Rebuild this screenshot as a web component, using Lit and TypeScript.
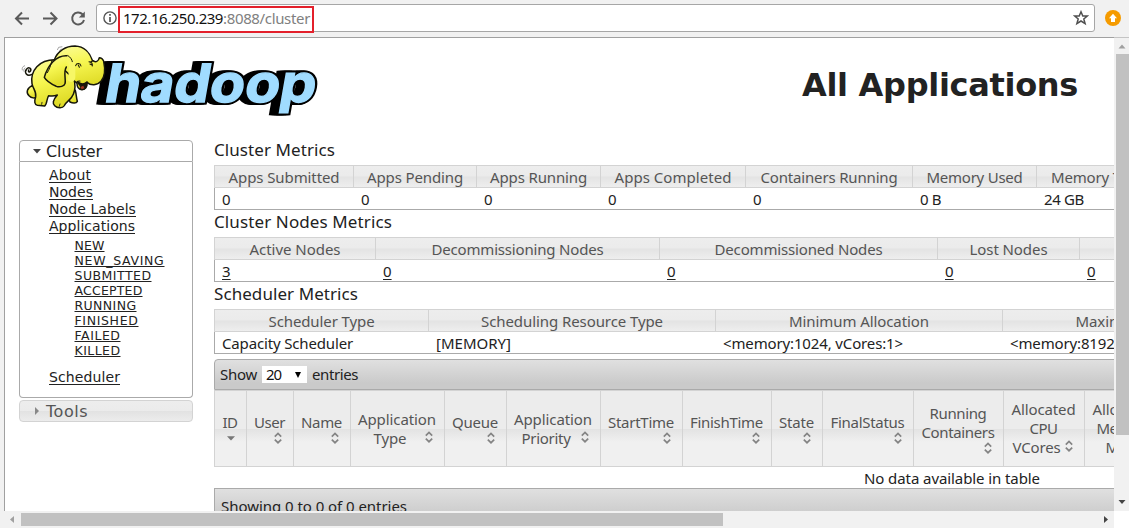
import { LitElement, html, css, svg, nothing } from "lit";
import { customElement } from "lit/decorators.js";

type Col = { w: number; head: string; hw: number; val: string; vw?: number; link?: boolean };
type AppCol = { w: number; lines: [string, number][]; inline?: boolean; sorted?: boolean };

const METRICS: { title: string; tw: number; cols: Col[] }[] = [
  {
    title: "Cluster Metrics", tw: 121,
    cols: [
      { w: 139, head: "Apps Submitted", hw: 111, val: "0" },
      { w: 123, head: "Apps Pending", hw: 96, val: "0" },
      { w: 124, head: "Apps Running", hw: 97, val: "0" },
      { w: 145, head: "Apps Completed", hw: 117, val: "0" },
      { w: 167, head: "Containers Running", hw: 137, val: "0" },
      { w: 124, head: "Memory Used", hw: 96, val: "0 B", vw: 21 },
      { w: 124, head: "Memory Total", hw: 95, val: "24 GB", vw: 40 },
    ],
  },
  {
    title: "Cluster Nodes Metrics", tw: 178,
    cols: [
      { w: 161, head: "Active Nodes", hw: 91, val: "3", link: true },
      { w: 284, head: "Decommissioning Nodes", hw: 172, val: "0", link: true },
      { w: 278, head: "Decommissioned Nodes", hw: 168, val: "0", link: true },
      { w: 142, head: "Lost Nodes", hw: 78, val: "0", link: true },
      { w: 222, head: "", hw: 0, val: "0", link: true },
    ],
  },
  {
    title: "Scheduler Metrics", tw: 144,
    cols: [
      { w: 214, head: "Scheduler Type", hw: 106, val: "Capacity Scheduler", vw: 131 },
      { w: 287, head: "Scheduling Resource Type", hw: 182, val: "[MEMORY]", vw: 75 },
      { w: 287, head: "Minimum Allocation", hw: 140, val: "<memory:1024, vCores:1>", vw: 180 },
      { w: 289, head: "Maximum Allocation", hw: 143, val: "<memory:8192, vCores:8>", vw: 180 },
    ],
  },
];

const APP_COLS: AppCol[] = [
  { w: 32, lines: [["ID", 15]], sorted: true },
  { w: 47, lines: [["User", 31]] },
  { w: 57, lines: [["Name", 41]] },
  { w: 94, lines: [["Application", 78], ["Type", 33]], inline: true },
  { w: 62, lines: [["Queue", 46]] },
  { w: 94, lines: [["Application", 78], ["Priority", 49]], inline: true },
  { w: 82, lines: [["StartTime", 66]] },
  { w: 89, lines: [["FinishTime", 73]] },
  { w: 51, lines: [["State", 35]] },
  { w: 91, lines: [["FinalStatus", 74]] },
  { w: 90, lines: [["Running", 57], ["Containers", 73]] },
  { w: 81, lines: [["Allocated", 64], ["CPU", 28], ["VCores", 48]], inline: true },
  { w: 81, lines: [["Allocated", 64], ["Memory", 56], ["MB", 24]], inline: true },
];

const STATES: [string, number][] = [
  ["NEW", 30], ["NEW_SAVING", 90], ["SUBMITTED", 77], ["ACCEPTED", 68],
  ["RUNNING", 62], ["FINISHED", 64], ["FAILED", 46], ["KILLED", 46],
];

const fit = (text: string, w?: number) => html`<span class="fit" data-w=${w ?? nothing}>${text}</span>`;

@customElement("app-root")
export class AppRoot extends LitElement {
  static styles = css`
    :host { display: flex; flex-direction: column; width: 1129px; height: 528px; overflow: hidden; background: #f1f1f1; color: #222;
      font: 15px/19px "Noto Sans", sans-serif; }
    * { box-sizing: border-box; }
    .fit { display: inline-block; white-space: nowrap; }
    .toolbar { flex: none; height: 37px; display: flex; align-items: center; padding: 0 8px 2px 14px; }
    .toolbar svg { flex: none; display: block; }
    .nav { width: 82px; height: 36px; }
    .omni { width: 999px; height: 28px; border: 1px solid #a6a6a6; border-radius: 3px; background: #fff; display: flex; align-items: center; padding: 0 5px 0 6px; margin-top: 1px; }
    .url { width: 196px; height: 27px; margin: 2px 0 0 1px; border: 2px solid #e3202b; padding-left: 3px; line-height: 20px; font-size: 15px; color: #111; }
    .url .path { color: #808080; }
    .star { margin-left: auto; }
    .ext { margin-left: 10px; }
    .view { flex: none; height: 474px; display: flex; }
    .page { width: 1110px; margin-left: 4px; border-left: 1px solid #a0a0a0; border-top: 1px solid #a0a0a0; background: #fff; overflow: hidden; }
    .head { display: flex; height: 102px; }
    .logo { flex: none; margin: 3px 0 0 5px; width: 320px; height: 80px; }
    .title { margin: 27px 0 0 472px; font: bold 32px/40px "DejaVu Sans", sans-serif; color: #222; }
    .cols { display: flex; }
    .side { flex: none; width: 174px; margin: 0 21px 0 14px; font-family: "DejaVu Sans", sans-serif; }
    .sec { height: 22px; display: flex; align-items: center; padding-left: 13px; font-size: 16px; border: 1px solid #aaa; border-radius: 4px 4px 0 0; }
    .sec svg { margin-right: 5px; }
    .sec.off { margin-top: 2px; border-color: #d3d3d3; border-radius: 4px; color: #555; background: linear-gradient(#ededed, #ebebeb 50%, #e2e2e2 51%, #ececec); }
    .list { height: 236px; border: 1px solid #aaa; border-top: 0; border-radius: 0 0 4px 4px; padding: 5px 0 0 29px; font-size: 14px; line-height: 17px; }
    .lnk { display: block; }
    .lnk .fit, .link { text-decoration: underline 1px; text-underline-offset: 2px; text-decoration-skip-ink: none; }
    .subs { padding: 3px 0 11px 25.5px; font-size: 12.5px; line-height: 15px; }
    .subs .fit { text-underline-offset: 1px; }
    .main { flex: none; width: 900px; overflow: hidden; }
    .blk { height: 72px; }
    .cap { height: 25px; font-size: 17px; line-height: 19px; }
    .tbl { width: 1087px; border-left: 1px solid #aaa; border-bottom: 1px solid #aaa; height: 45px; }
    .row { display: flex; margin-left: -1px; }
    .th { flex: none; height: 23px; border: 1px solid #d3d3d3; border-right: 0; color: #555; text-align: center; line-height: 22px;
      background: linear-gradient(#ededed, #ebebeb 49%, #e3e3e3 51%, #eee); }
    .td { flex: none; height: 21px; padding-left: 8px; line-height: 22px; }
    .bar { width: 1476px; height: 31px; border: 1px solid #aaa; border-radius: 4px 0 0 0; display: flex; align-items: center; padding-left: 5px; background: linear-gradient(#e0e0e0, #cacaca 80%); margin-top: 3px; }
    .pick { width: 45px; height: 17px; margin: 0 5px; background: #fff; display: flex; align-items: center; padding: 0 5px 0 4px; justify-content: space-between; color: #111; }
    .apps { display: flex; height: 77px; border-bottom: 1px solid #d3d3d3; }
    .ah { flex: none; border-left: 1px solid #d3d3d3; border-top: 1px solid #d3d3d3; display: flex; flex-direction: column; justify-content: center; color: #555; padding: 0 8px 0 7px; text-align: center;
      background: linear-gradient(#ececec 50%, #e3e3e3 51%, #f0f0f0 68%); }
    .ln { display: flex; justify-content: center; height: 19px; line-height: 19px; }
    .ln.wi { justify-content: flex-start; }
    .ln.wi .g { flex: 1; display: flex; justify-content: center; }
    .ic { flex: none; width: 14px; height: 12px; display: block; }
    .ic.end { align-self: flex-end; }
    .ic.mid { margin-top: 2px; }
    .none { width: 1476px; height: 21px; text-align: center; line-height: 22px; }
    .foot { height: 36px; border-radius: 0; margin-top: 0; padding-left: 6px; }
    .vs { width: 15px; display: flex; flex-direction: column; background: #f1f1f1; border-top: 1px solid #c4c4c4; padding-left: 2px; }
    .vthumb { width: 13px; height: 381px; background: #c1c1c1; }
    .vs svg, .hs svg { display: block; flex: none; }
    .vsp { flex: 1; }
    .hs { flex: none; height: 17px; display: flex; align-items: center; background: #f1f1f1; }
    .hthumb { width: 702px; height: 13px; background: #c1c1c1; }
    .hsp { flex: 1; }
    .corner { width: 15px; height: 17px; background: #fff; }
    .word { font: 700 158px "Inter", "DejaVu Sans", sans-serif; }
  `;

  // Spreads each measured label over the width given in its data.
  firstUpdated() {
    this.renderRoot.querySelectorAll<HTMLElement>(".fit[data-w]").forEach((el) => {
      const n = (el.textContent ?? "").length;
      if (!n) return;
      const diff = Number(el.dataset.w) - el.getBoundingClientRect().width;
      el.style.letterSpacing = `${diff / n}px`;
    });
  }

  logo() {
    const word = (x: number, color: string, sw: number) => svg`
      <text class="word" x=${x} y="182" transform="translate(33 0) skewX(-10)" textLength="632" lengthAdjust="spacingAndGlyphs"
        fill=${color} stroke=${color} stroke-width=${sw} stroke-linejoin="miter" stroke-miterlimit="3">hadoop</text>`;
    return html`<svg class="logo" viewBox="0 0 960 240">
      <defs><linearGradient id="sk" x1="0" y1="0" x2="0.3" y2="1"><stop offset="0" stop-color="#fbfc9c"/><stop offset=".5" stop-color="#f6f650"/><stop offset="1" stop-color="#e0dc28"/></linearGradient></defs>
      ${[256, 261, 266, 271, 276, 279].map((x) => word(x, "#000", 15))}
      ${word(278, "#a0dcff", 4)}
      <g fill="url(#sk)" stroke="#17170a" stroke-width="4.5" stroke-linejoin="round" stroke-linecap="round">
        <path d="M66 100 C50 108 42 94 50 84 C56 76 66 82 61 91 C57 95 54 91 56 87" fill="none"/>
        <path d="M66 134 C50 142 48 156 57 164 C64 171 76 174 80 166 L84 146 Z"/>
        <path d="M172 160 L180 183 C188 187 199 188 202 181 C199 171 199 160 196 148 Z"/>
        <path d="M134 56 C88 56 60 88 66 128 C68 142 80 151 77 168 C72 181 74 192 82 193 L104 195 C112 190 109 174 116 164 C126 166 132 166 142 162 C128 178 127 188 134 194 C142 202 158 202 162 195 C168 181 184 177 190 160 C198 142 195 124 191 110 L150 60 Z"/>
        <path d="M133 56 C143 30 167 15 195 15 C223 16 240 36 247 58 C257 66 266 61 268 50 C273 50 278 53 281 61 C286 84 284 108 273 121 C262 134 242 134 231 124 C232 138 226 147 215 146 C206 145 201 137 201 127 C192 119 184 112 181 104 Z"/>
        <path d="M174 60 C178 78 178 94 172 116 C184 128 196 122 196 108 L196 60 Z" fill="#f7f766" stroke="none"/>
        <path d="M202 122 C211 130 223 130 231 123 C230 139 224 146 215 145 C209 143 215 136 209 132 Z" fill="#1c160c"/>
        <path d="M211 138 L220 134 L223 142 L215 145 Z" fill="#a43822" stroke="none"/>
        <path d="M171 44 C139 42 113 73 103 109 C111 123 124 129 139 136 C150 140 163 135 165 128 C169 117 159 94 169 78"/>
        <path d="M174 44 C181 48 186 56 187 62 M126 58 C122 74 118 86 112 95" fill="none" stroke-width="3"/>
        <path d="M197 74 C200 65 211 66 213 75 M205 72 L208 79 M237 62 C244 62 248 67 247 75 M240 64 L249 59 M240 69 L246 72 M203 121 L210 120" fill="none" stroke-width="3.2"/>
        <path d="M95 190 L96 184 M148 196 L150 189" fill="none" stroke-width="2.5"/>
      </g>
      <path d="M37 88 C35 81 39 75 45 74 M42 92 C40 86 43 82 46 80 M142 27 L146 19 L157 17 M148 29 L154 24" fill="none" stroke="#777" stroke-width="2"/>
    </svg>`;
  }

  sortIcon(cls: string, sorted = false) {
    return html`<svg class="ic ${cls}" viewBox="0 0 14 12">${sorted
      ? svg`<path d="M3 4.2H11L7 8.6Z" fill="#777"/>`
      : svg`<path d="M3.8 4.6L7 1.5L10.2 4.6M3.8 7.6L7 10.7L10.2 7.6" fill="none" stroke="#848484" stroke-width="1.7"/>`}</svg>`;
  }

  appHead(c: AppCol) {
    const last = c.lines.length - 1;
    return html`<div class="ah" style="width:${c.w}px">
      ${c.lines.map(([t, w], i) => c.inline && i === last
        ? html`<div class="ln wi"><span class="g">${fit(t, w)}</span>${this.sortIcon("mid")}</div>`
        : html`<div class="ln">${fit(t, w)}</div>`)}
      ${c.inline ? nothing : this.sortIcon("end", c.sorted)}
    </div>`;
  }

  render() {
    return html`
      <div class="toolbar">
        <svg class="nav" viewBox="14 0 82 36" fill="none" stroke="#5a5a5a" stroke-width="2">
          <path d="M29 18.5H16.5M22 12.5L16 18.5L22 24.5"/>
          <path d="M43 18.5H56M50.5 12.5L56.5 18.5L50.5 24.5"/>
          <path d="M82.5 14.2A6 6 0 1 0 84 20"/><path d="M84.8 11.5V17.5H78.8Z" fill="#5a5a5a" stroke="none"/>
        </svg>
        <div class="omni">
          <svg width="14" height="14" viewBox="0 0 14 14" fill="none" stroke="#555"><circle cx="7" cy="7" r="6.1" stroke-width="1.4"/><path d="M7 6V11M7 3V4.7" stroke-width="1.7"/></svg>
          <div class="url">${fit("172.16.250.239", 100)}<span class="path">${fit(":8088/cluster", 87)}</span></div>
          <svg class="star" width="16" height="16" viewBox="0 0 16 16"><path d="M8 1.8L9.8 6H14.3L10.8 8.9L12.1 13.6L8 11L3.9 13.6L5.2 8.9L1.7 6H6.2Z" fill="none" stroke="#505050" stroke-width="1.5"/></svg>
        </div>
        <svg class="ext" width="16" height="16" viewBox="0 0 16 16"><circle cx="8" cy="8" r="8" fill="#f59b00"/><path d="M8 3.8L12 8.2H10V12H6V8.2H4Z" fill="#fff"/></svg>
      </div>
      <div class="view">
        <div class="page">
          <div class="head">${this.logo()}<div class="title">${fit("All Applications", 276)}</div></div>
          <div class="cols">
            <div class="side">
              <div class="sec"><svg width="8" height="6"><path d="M0 1H8L4 5.5Z" fill="#444"/></svg>${fit("Cluster", 56)}</div>
              <div class="list">
                <span class="lnk">${fit("About", 42)}</span>
                <span class="lnk">${fit("Nodes", 44)}</span>
                <span class="lnk">${fit("Node Labels", 87)}</span>
                <span class="lnk">${fit("Applications", 86)}</span>
                <div class="subs">${STATES.map(([t, w]) => html`<span class="lnk">${fit(t, w)}</span>`)}</div>
                <span class="lnk">${fit("Scheduler", 71)}</span>
              </div>
              <div class="sec off"><svg width="8" height="8"><path d="M2 0V8L6 4Z" fill="#888"/></svg>${fit("Tools", 42)}</div>
            </div>
            <div class="main">
              ${METRICS.map((m) => html`<div class="blk">
                <div class="cap">${fit(m.title, m.tw)}</div>
                <div class="tbl">
                  <div class="row">${m.cols.map((c) => html`<div class="th" style="width:${c.w}px">${fit(c.head, c.hw)}</div>`)}</div>
                  <div class="row">${m.cols.map((c) => html`<div class="td" style="width:${c.w}px"><span class=${c.link ? "link" : "val"}>${c.link ? c.val : fit(c.val, c.vw)}</span></div>`)}</div>
                </div>
              </div>`)}
              <div class="bar">${fit("Show", 37)}<div class="pick">${fit("20", 15)}<svg width="8" height="8"><path d="M1 1H7L4 7Z" fill="#000"/></svg></div>${fit("entries", 46)}</div>
              <div class="apps">${APP_COLS.map((c) => this.appHead(c))}</div>
              <div class="none">${fit("No data available in table", 176)}</div>
              <div class="bar foot">${fit("Showing 0 to 0 of 0 entries", 186)}</div>
            </div>
          </div>
        </div>
        <div class="vs">
          <svg width="13" height="16"><path d="M2.5 10.5H9.5L6 6.5Z" fill="#a0a0a0"/></svg>
          <div class="vthumb"></div><div class="vsp"></div>
          <svg width="13" height="17"><path d="M2.5 6H9.5L6 10Z" fill="#444"/></svg>
        </div>
      </div>
      <div class="hs">
        <svg width="21" height="17"><path d="M14 5V12L10 8.5Z" fill="#a0a0a0"/></svg>
        <div class="hthumb"></div><div class="hsp"></div>
        <svg width="14" height="17"><path d="M4 5V12L8 8.5Z" fill="#444"/></svg>
        <div class="corner"></div>
      </div>`;
  }
}
